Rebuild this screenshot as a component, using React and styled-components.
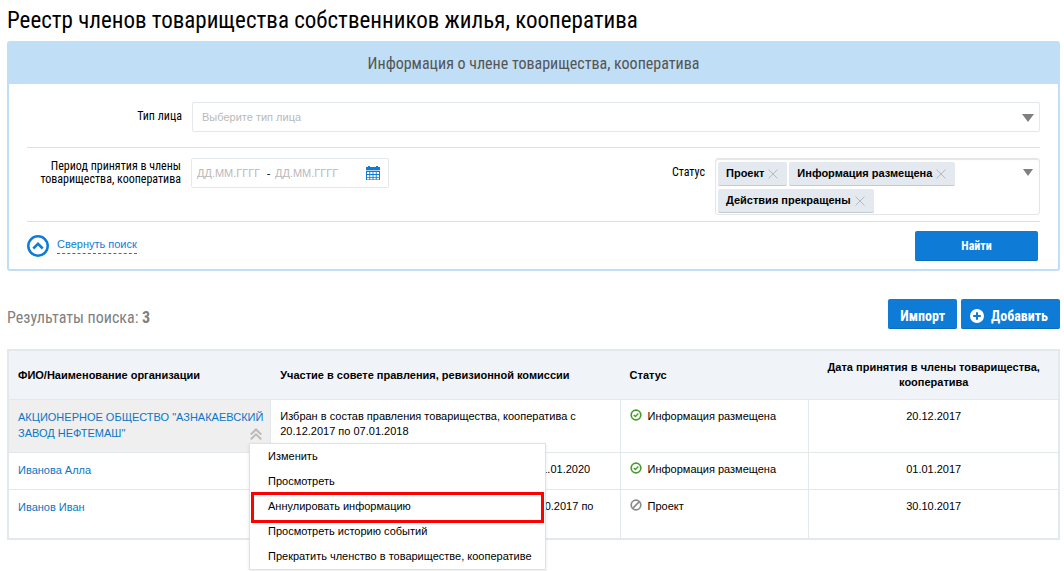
import React, { useState } from 'react'
import styled, { createGlobalStyle } from 'styled-components'

const condensed = `'Roboto Condensed', 'Liberation Sans Narrow', 'Liberation Sans', sans-serif`

const GlobalStyle = createGlobalStyle`
	* {
		box-sizing: border-box;
	}
	body {
		margin: 0;
		background: #fff;
		color: #000;
		font: 11px/15px 'Liberation Sans', Arial, sans-serif;
	}
	button, input, select {
		font: inherit;
		color: inherit;
	}
`

const Page = styled.main`
	min-height: 100vh;
	padding: 8px 4px 0 7px;
`

const Title = styled.h1`
	margin: 0 0 7px;
	font: 400 23px/26px ${condensed};
`

const Panel = styled.form`
	border: 2px solid #c0def6;
	border-radius: 3px;
`

const PanelHeader = styled.h2`
	margin: 0;
	padding-top: 1px;
	background: #c0def6;
	color: #555;
	font: 400 16px/40px ${condensed};
	text-align: center;
`

const Section = styled.div`
	display: flex;
	justify-content: space-between;
	margin: 0 18px;
	padding: ${props => props.$pad};
	border-bottom: 1px solid #dcdfe3;
`

const Field = styled.div`
	display: flex;
	align-items: flex-start;
	flex: ${props => (props.$grow ? 1 : 'none')};
`

const Label = styled.label`
	width: ${props => props.$width};
	margin-right: 10px;
	padding-top: ${props => props.$top || '0'};
	font: 400 12px/13px ${condensed};
	text-align: right;
`

const SelectWrap = styled.div`
	position: relative;
	flex: 1;
`

const Select = styled.select`
	display: block;
	width: 100%;
	height: 30px;
	padding: 0 30px 0 9px;
	border: 1px solid #e3e8ed;
	border-radius: 2px;
	background: #fff;
	color: #b9b9b9;
	appearance: none;
`

const Arrow = styled.span`
	position: absolute;
	top: 12px;
	right: 6px;
	border: 6px solid transparent;
	border-top: 8px solid #808080;
	border-bottom: 0;
	pointer-events: none;
`

const DateRange = styled.div`
	display: flex;
	align-items: center;
	width: 198px;
	height: 30px;
	padding: 0 8px 0 5px;
	border: 1px solid #e3e8ed;
	border-radius: 2px;
`

const DateInput = styled.input`
	width: 65px;
	padding: 0;
	border: 0;
	outline: 0;
	&::placeholder {
		color: #b9b9b9;
	}
`

const Dash = styled.span`
	width: 13px;
	text-align: center;
`

const IconButton = styled.button`
	display: flex;
	margin-left: auto;
	padding: 0;
	border: 0;
	background: none;
	cursor: pointer;
`

const TagBox = styled.div`
	display: flex;
	flex-wrap: wrap;
	position: relative;
	gap: 3px 2px;
	width: 325px;
	padding: 3px 24px 1px 2px;
	border: 1px solid #e3e6e9;
	border-radius: 3px;
	box-shadow: inset 0 1px 1px #e3e6e9;
`

const Tag = styled.span`
	display: flex;
	align-items: center;
	gap: 4px;
	height: 24px;
	padding: 0 9px 0 8px;
	border-bottom: 1px solid #c3c9d0;
	border-radius: 2px;
	background: #e4e9f0;
	font-weight: 700;
`

const OpenButton = styled.button`
	position: absolute;
	top: 10px;
	right: 6px;
	padding: 0;
	border: 5px solid transparent;
	border-top: 7px solid #808080;
	border-bottom: 0;
	background: none;
`

const PanelFooter = styled.div`
	display: flex;
	align-items: center;
	justify-content: space-between;
	padding: 9px 20px 8px 18px;
`

const Collapse = styled.a`
	display: flex;
	align-items: center;
	gap: 8px;
	color: #0e7cd6;
	text-decoration: none;
	span {
		padding-bottom: 1px;
		margin-bottom: 1px;
		border-bottom: 1px dashed #0e7cd6;
	}
`

const Button = styled.button`
	display: flex;
	align-items: center;
	justify-content: center;
	gap: 7px;
	height: 30px;
	min-width: ${props => props.$minWidth || '0'};
	padding: ${props => (props.$large ? '4px 12px 0' : '0 12px')};
	border: 0;
	border-bottom: 1px solid #0b6dbd;
	border-radius: 2px;
	background: #0e7cd6;
	color: #fff;
	font: 700 ${props => (props.$large ? '14px' : '12px')}/20px ${condensed};
	cursor: pointer;
	svg {
		margin-left: -3px;
	}
`

const ResultsBar = styled.div`
	display: flex;
	align-items: center;
	gap: 4px;
	margin: 28px 0 20px;
`

const ResultsTitle = styled.h2`
	flex: 1;
	margin: 0;
	padding-top: 7px;
	color: #808080;
	font: 400 16px/20px ${condensed};
`

const Table = styled.table`
	width: 100%;
	border: 2px solid #e3e8ed;
	border-spacing: 0;
	table-layout: fixed;
`

const Th = styled.th`
	width: ${props => props.$width};
	height: 49px;
	padding: 0 9px;
	border-bottom: 1px solid #e3e8ed;
	background: #f0f4f8;
	text-align: ${props => props.$align || 'left'};
`

const Td = styled.td`
	position: relative;
	padding: 9px ${props => (props.$align ? '9px' : '4px')} 11px 9px;
	border-bottom: 1px solid #e3e8ed;
	border-right: 1px solid #e3e8ed;
	background: ${props => (props.$active ? '#efefef' : '#fff')};
	text-align: ${props => props.$align || 'left'};
	vertical-align: top;
	&:last-child {
		border-right: 0;
	}
	tr:last-child > & {
		padding-bottom: 9px;
		border-bottom: 0;
	}
`

const NameLink = styled.a`
	display: block;
	color: #0a76c4;
	line-height: 16px;
	text-decoration: none;
`

const Status = styled.span`
	display: flex;
	align-items: flex-start;
	gap: 6px;
`

const Toggle = styled.button`
	display: flex;
	position: absolute;
	right: 8px;
	bottom: 12px;
	padding: 0;
	border: 0;
	background: none;
`

const Menu = styled.ul`
	position: absolute;
	top: 43px;
	left: 240px;
	z-index: 2;
	width: 297px;
	margin: 0;
	padding: 0;
	border: 1px solid #dde2ea;
	background: #fff;
	box-shadow: 0 1px 3px rgba(0, 0, 0, 0.1);
	list-style: none;
`

const MenuItem = styled.li`
	position: relative;
	&::after {
		content: '';
		display: ${props => (props.$marked ? 'block' : 'none')};
		position: absolute;
		inset: -2px 1px -4px;
		border: 3px solid #f00;
		pointer-events: none;
	}
`

const MenuButton = styled.button`
	display: block;
	width: 100%;
	height: 25px;
	padding: 0 18px;
	border: 0;
	background: none;
	text-align: left;
	white-space: nowrap;
`

const CalendarIcon = () => (
	<svg width="14" height="14" viewBox="0 0 14 14">
		<path d="M0 1h2V0h2v1h6V0h2v1h2v3H0z" fill="#0e7cd6" />
		<path d="M0 4h14v1H0z" fill="#b5d6f2" />
		<path d="M0 5h14v9H0z" fill="#0e7cd6" />
		<path d="M1 7h12M1 10h12M1 12.700h12" stroke="#fff" strokeWidth="1.800" strokeDasharray="2.300 .93" />
	</svg>
)

const CollapseIcon = () => (
	<svg width="22" height="22" viewBox="0 0 22 22" fill="none" stroke="#0e7cd6" strokeWidth="2.500">
		<circle cx="11" cy="11" r="9.700" />
		<path d="M6.300 13.500 11 8.800l4.700 4.700" />
	</svg>
)

const CrossIcon = () => (
	<svg width="10" height="10" viewBox="0 0 10 10" stroke="#b4bac2">
		<path d="M.5.5l9 9M9.500.5l-9 9" />
	</svg>
)

const PlusIcon = () => (
	<svg width="14" height="14" viewBox="0 0 14 14">
		<circle cx="7" cy="7" r="7" fill="#fff" />
		<path d="M7 3.200v7.600M3.200 7h7.600" stroke="#0e7cd6" strokeWidth="2" />
	</svg>
)

const DoubleUpIcon = () => (
	<svg width="12" height="12" viewBox="0 0 12 12" fill="none" stroke="#bbb" strokeWidth="2">
		<path d="M.8 6.500 6 1.500l5.200 5M.8 11.300 6 6.300l5.200 5" />
	</svg>
)

const StatusIcon = ({ placed }) => (
	<svg width="12" height="12" viewBox="0 0 12 12" fill="none" stroke={placed ? '#4a9c2d' : '#8c8c8c'} strokeWidth="1.700">
		<circle cx="6" cy="6" r="4.800" />
		{placed ? <path d="M3.700 5.900l1.700 1.600 2.900-2.900" strokeWidth="1.400" /> : <path d="M2.700 9.300l6.600-6.600" />}
	</svg>
)

const statuses = ['Проект', 'Информация размещена', 'Действия прекращены']

const actions = [
	'Изменить',
	'Просмотреть',
	'Аннулировать информацию',
	'Просмотреть историю событий',
	'Прекратить членство в товариществе, кооперативе'
]

const members = [
	{
		name: 'АКЦИОНЕРНОЕ ОБЩЕСТВО "АЗНАКАЕВСКИЙ ЗАВОД НЕФТЕМАШ"',
		role: 'Избран в состав правления товарищества, кооператива с 20.12.2017 по 07.01.2018',
		placed: true,
		date: '20.12.2017'
	},
	{
		name: 'Иванова Алла',
		role: 'Избран в ревизионную комиссию с 01.01.2017 по 01.01.2020',
		placed: true,
		date: '01.01.2017'
	},
	{
		name: 'Иванов Иван',
		role: 'Избран председателем собрания, правления с 30.10.2017 по 30.10.2018',
		placed: false,
		date: '30.10.2017'
	}
]

export default function App() {
	const [tags, setTags] = useState(statuses)
	const [opened, setOpened] = useState(0)
	return (
		<Page>
			<GlobalStyle />
			<Title>Реестр членов товарищества собственников жилья, кооператива</Title>
			<Panel onSubmit={e => e.preventDefault()}>
				<PanelHeader>Информация о члене товарищества, кооператива</PanelHeader>
				<Section $pad="18px 0 15px">
					<Field $grow>
						<Label htmlFor="personType" $width="155px" $top="8px">Тип лица</Label>
						<SelectWrap>
							<Select id="personType" defaultValue="">
								<option value="">Выберите тип лица</option>
							</Select>
							<Arrow />
						</SelectWrap>
					</Field>
				</Section>
				<Section $pad="10px 0 6px">
					<Field>
						<Label htmlFor="dateFrom" $width="154px" $top="2px">Период принятия в члены товарищества, кооператива</Label>
						<DateRange>
							<DateInput id="dateFrom" placeholder="ДД.ММ.ГГГГ" />
							<Dash>-</Dash>
							<DateInput aria-label="Период по" placeholder="ДД.ММ.ГГГГ" />
							<IconButton type="button" aria-label="Календарь"><CalendarIcon /></IconButton>
						</DateRange>
					</Field>
					<Field>
						<Label as="span" id="statusLabel" $top="8px">Статус</Label>
						<TagBox role="group" aria-labelledby="statusLabel">
							{tags.map(tag => (
								<Tag key={tag}>
									{tag}
									<IconButton type="button" aria-label="Удалить" onClick={() => setTags(tags.filter(t => t !== tag))}>
										<CrossIcon />
									</IconButton>
								</Tag>
							))}
							<OpenButton type="button" aria-label="Открыть список" />
						</TagBox>
					</Field>
				</Section>
				<PanelFooter>
					<Collapse href="#search">
						<CollapseIcon />
						<span>Свернуть поиск</span>
					</Collapse>
					<Button $minWidth="123px">Найти</Button>
				</PanelFooter>
			</Panel>
			<ResultsBar>
				<ResultsTitle>Результаты поиска: <b>3</b></ResultsTitle>
				<Button $large>Импорт</Button>
				<Button $large><PlusIcon />Добавить</Button>
			</ResultsBar>
			<Table>
				<thead>
					<tr>
						<Th $width="25%">ФИО/Наименование организации</Th>
						<Th $width="33.3%">Участие в совете правления, ревизионной комиссии</Th>
						<Th $width="18%">Статус</Th>
						<Th $align="center">Дата принятия в члены товарищества, кооператива</Th>
					</tr>
				</thead>
				<tbody>
					{members.map((member, i) => (
						<tr key={member.name}>
							<Td $active={i === opened}>
								<NameLink href="#member">{member.name}</NameLink>
								{i === opened && (
									<>
										<Toggle aria-label="Действия" onClick={() => setOpened(null)}><DoubleUpIcon /></Toggle>
										<Menu>
											{actions.map((action, n) => (
												<MenuItem key={action} $marked={n === 2}>
													<MenuButton>{action}</MenuButton>
												</MenuItem>
											))}
										</Menu>
									</>
								)}
							</Td>
							<Td>{member.role}</Td>
							<Td><Status><StatusIcon placed={member.placed} />{member.placed ? 'Информация размещена' : 'Проект'}</Status></Td>
							<Td $align="center">{member.date}</Td>
						</tr>
					))}
				</tbody>
			</Table>
		</Page>
	)
}
